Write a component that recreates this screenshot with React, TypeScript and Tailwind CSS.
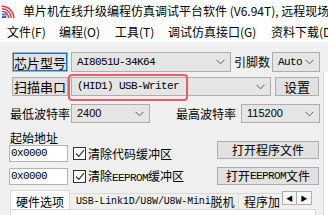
import React from "react";

const mono = "font-['Liberation_Mono','Noto_Sans_CJK_SC',monospace] text-[11px] tracking-[-0.6px]";
const latin = "font-['Liberation_Sans','Noto_Sans_CJK_SC',sans-serif]";

function Logo() {
  return (
    <svg width="13" height="13" viewBox="0 0 13 13" className="ml-[2px] shrink-0">
      <path d="M0 1.2 A11.8 11.8 0 0 1 11.8 13" fill="none" stroke="#e2303f" strokeWidth="1.4" />
      <path d="M0 3.8 A9.2 9.2 0 0 1 9.2 13" fill="none" stroke="#e2303f" strokeWidth="1.4" />
      <path d="M0 6.4 A6.6 6.6 0 0 1 6.6 13" fill="none" stroke="#e2303f" strokeWidth="1.4" />
      <rect x="0" y="8.6" width="4.4" height="1.2" fill="#2b4fc9" />
      <rect x="0" y="10.6" width="4.4" height="1.2" fill="#2b4fc9" />
      <rect x="0" y="12" width="4.4" height="1" fill="#2b4fc9" />
    </svg>
  );
}

function Chevron() {
  return (
    <svg width="9" height="6" viewBox="0 0 9 6" className="shrink-0">
      <path d="M0.5 0.8 L4.5 4.8 L8.5 0.8" fill="none" stroke="#5a5a5a" strokeWidth="1" />
    </svg>
  );
}

function Check() {
  return (
    <div className="flex h-[13px] w-[13px] shrink-0 items-center justify-center border border-[#333333] bg-white">
      <svg width="10" height="9" viewBox="0 0 10 9">
        <path d="M1 4.5 L3.8 7.3 L9 1.2" fill="none" stroke="#333333" strokeWidth="1.2" />
      </svg>
    </div>
  );
}

export default function App() {
  const btn = "flex shrink-0 items-center justify-center border border-[#adadad] bg-[#e1e1e1] leading-none";
  const combo = "flex h-full shrink-0 items-center justify-between border border-[#adadad] bg-[#e5e5e5] pl-[5px] pr-[5px] leading-none";
  const field = "flex h-full shrink-0 items-center border border-[#b4b4b4] bg-white pl-[1px] leading-none";

  return (
    <div className="relative h-[215px] w-[328px] overflow-hidden bg-[#f0f0f0] font-['Noto_Sans_CJK_SC',sans-serif] text-[12px] text-black">
      {/* Title bar */}
      <div className="flex h-[22px] items-center bg-white">
        <Logo />
        <span className="ml-[8px] whitespace-nowrap leading-none">
          单片机在线升级编程仿真调试平台软件 (V6.94T), 远程现场升级
        </span>
      </div>

      {/* Menu */}
      <div className="flex h-[20px] items-center whitespace-nowrap bg-white pl-[7px] leading-none">
        <span className="w-[52px] shrink-0">文件(F)</span>
        <span className="w-[56px] shrink-0">编程(O)</span>
        <span className="w-[53px] shrink-0">工具(T)</span>
        <span className="w-[103px] shrink-0">调试仿真接口(G)</span>
        <span>资料下载(D)</span>
      </div>

      <div className="flex">
        <div className="w-[323px] shrink-0 pl-[9px]">
          {/* Row 1 */}
          <div className="mt-[10px] flex h-[20px] items-center">
            <div className={`${btn} ml-[3px] h-full w-[56px] border-[#0078d7] text-[13px] shadow-[inset_0_0_0_1px_#0078d7]`}>芯片型号</div>
            <div className={`${combo} ml-[3px] w-[160px]`}>
              <span className={mono}>AI8051U-34K64</span>
              <Chevron />
            </div>
            <span className="ml-[3px] w-[36px] shrink-0 leading-none">引脚数</span>
            <div className={`${combo} ml-[2px] w-[48px] pl-[4px]`}>
              <span className={mono}>Auto</span>
              <Chevron />
            </div>
          </div>

          {/* Row 2 */}
          <div className="mt-[5px] flex h-[19px] items-center">
            <div className={`${btn} ml-[3px] h-full w-[56px] text-[13px]`}>扫描串口</div>
            <div className={`${combo} ml-[3px] w-[200px]`}>
              <span className={mono}>(HID1) USB-Writer</span>
              <Chevron />
            </div>
            <div className={`${btn} ml-[4px] h-full w-[44px] text-[13px]`}>设置</div>
          </div>

          {/* Row 3 */}
          <div className="mt-[8px] flex h-[19px] items-center">
            <span className="ml-[1px] w-[61px] shrink-0 leading-none">最低波特率</span>
            <div className={`${combo} w-[79px]`}>
              <span className={`${latin} text-[11px]`}>2400</span>
              <Chevron />
            </div>
            <span className="ml-[26px] w-[60px] shrink-0 leading-none">最高波特率</span>
            <div className={`${combo} ml-[5px] w-[79px]`}>
              <span className={`${latin} text-[11px]`}>115200</span>
              <Chevron />
            </div>
          </div>

          {/* Rows 4-6 */}
          <div className="mt-[7px] flex">
            <div className="w-[208px] shrink-0">
              <div className="ml-[1px] h-[15px] leading-[15px]">起始地址</div>
              <div className="flex h-[17px] items-center">
                <div className={`${field} w-[59px]`}>
                  <span className={mono}>0x0000</span>
                </div>
                <div className="ml-[5px]">
                  <Check />
                </div>
                <span className="ml-[2px] whitespace-nowrap leading-none">清除代码缓冲区</span>
              </div>
              <div className="mt-[6px] flex h-[17px] items-center">
                <div className={`${field} w-[59px]`}>
                  <span className={mono}>0x0000</span>
                </div>
                <div className="ml-[5px]">
                  <Check />
                </div>
                <span className="ml-[2px] whitespace-nowrap leading-none">
                  清除<span className={mono}>EEPROM</span>缓冲区
                </span>
              </div>
            </div>
            <div className="w-[102px] shrink-0">
              <div className={`${btn} mt-[11px] h-[18px]`}>打开程序文件</div>
              <div className={`${btn} mt-[8px] h-[18px]`}>
                打开<span className={mono}>EEPROM</span>文件
              </div>
            </div>
          </div>

          {/* Tabs */}
          <div className="mt-[5px] flex h-[19px] w-[310px] items-start overflow-hidden pl-[1px]">
            <div className="flex h-[19px] w-[60px] shrink-0 items-center justify-center border border-b-0 border-[#d9d9d9] bg-white pt-[3px] leading-none">
              硬件选项
            </div>
            <div className="mt-[3px] flex h-[16px] w-[169px] shrink-0 items-center overflow-hidden whitespace-nowrap border-t border-r border-[#d9d9d9] pl-[6px] leading-none">
              <span className="font-['Liberation_Mono','Noto_Sans_CJK_SC',monospace] text-[10px] tracking-[-0.15px]">USB-Link1D/U8W/U8W-Mini</span>
              <span>脱机</span>
            </div>
            <div className="mt-[3px] flex h-[16px] w-[43px] shrink-0 items-center overflow-hidden whitespace-nowrap border-t border-[#d9d9d9] pl-[5px] leading-none">
              程序加
            </div>
            <div className="mt-[1px] flex shrink-0">
              <div className="flex h-[14px] w-[15px] items-center justify-center border border-[#adadad] bg-[#f8f8f8] text-[7px] leading-none">◀</div>
              <div className="flex h-[14px] w-[15px] items-center justify-center border border-l-0 border-[#adadad] bg-[#f8f8f8] text-[7px] leading-none">▶</div>
            </div>
          </div>
          <div className="ml-[1px] h-[20px] w-[306px] border border-b-0 border-[#d9d9d9] bg-white" />
        </div>
        <div className="mt-[30px] h-[200px] flex-1 border-l border-[#d6d6d6] bg-white" />
      </div>

      {/* annotation highlight */}
      <div className="absolute left-[68px] top-[74px] h-[27px] w-[120px] rounded-[4px] border-2 border-[#ef5a69]" />
    </div>
  );
}
